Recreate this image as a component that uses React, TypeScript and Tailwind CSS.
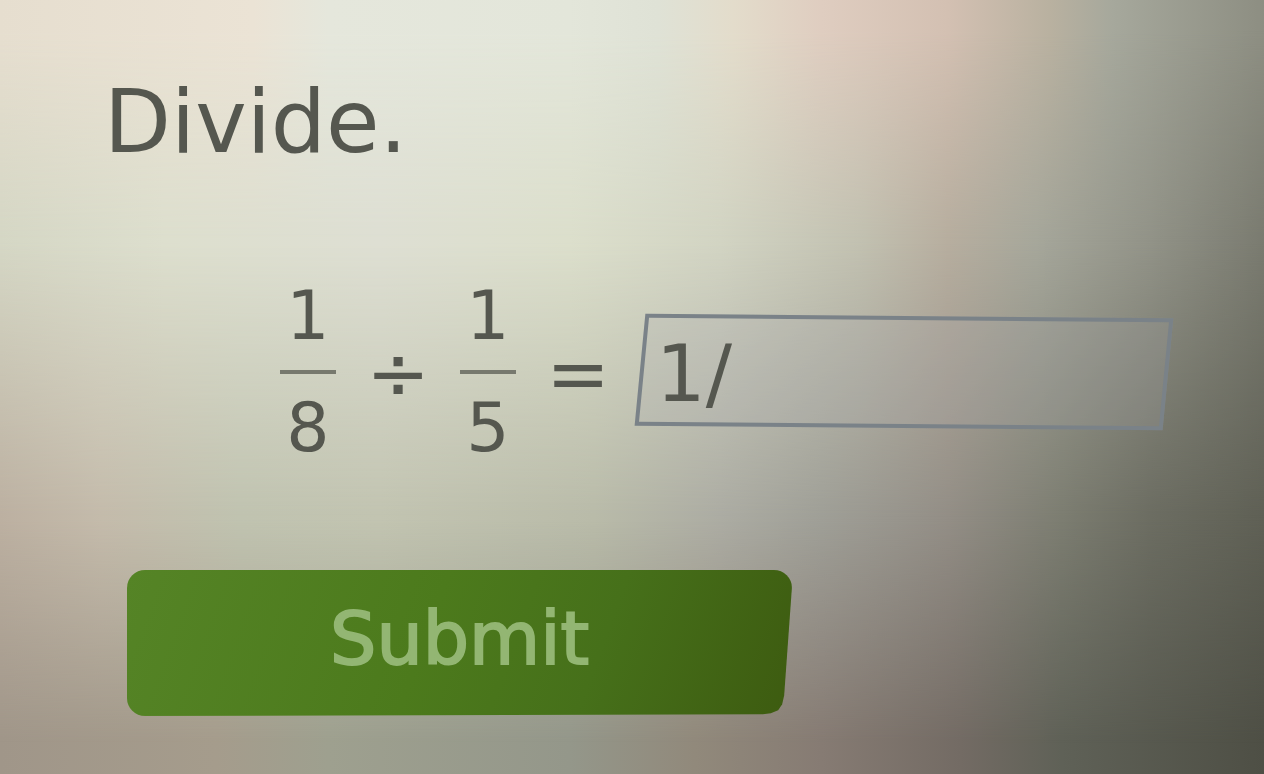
import { useState } from "react";

function Fraction({ top, bottom }: { top: string; bottom: string }) {
  return (
    <span className="flex w-14 shrink-0 flex-col text-center text-[68px] leading-[56px]">
      <span className="pb-[26px]">{top}</span>
      <span className="h-1 bg-[#77796e]" />
      <span className="pt-[26px]">{bottom}</span>
    </span>
  );
}

function Operator({ sign }: { sign: string }) {
  return <span className="w-[124px] shrink-0 pt-1 text-center text-[76px] leading-[88px]">{sign}</span>;
}

function Backdrop() {
  return (
    <div aria-hidden="true" className="absolute inset-0 -z-10">
      <div className="absolute inset-0 bg-[linear-gradient(90deg,#a09689_0%,#a59c8c_17%,#9ea08f_26%,#94978a_45%,#91897b_55%,#867b73_65%,#736b64_76%,#5f6157_84%,#4e4f45_100%)]" />
      <div className="absolute inset-0 bg-[linear-gradient(90deg,#bcb0a1_0%,#c4bbab_8%,#c0c3b0_19%,#c2c4b1_30%,#b9bba9_47%,#acaca3_57%,#9f9f97_65%,#938e86_75%,#7c7d71_84%,#6c6d62_91%,#5f6055_100%)] [mask-image:linear-gradient(180deg,#000_67%,transparent_96%)]" />
      <div className="absolute inset-0 bg-[linear-gradient(90deg,#d5d7c5_0%,#dddfce_13%,#dedfd3_30%,#dcdfcc_45%,#d2d4c3_57%,#c2c1b1_68%,#b7ae9f_75%,#a6a79b_82%,#929388_91%,#7a7b70_100%)] [mask-image:linear-gradient(180deg,#000_31%,transparent_67%)]" />
      <div className="absolute inset-0 bg-[linear-gradient(90deg,#e6decf_0%,#ebe3d5_20%,#e5e7dc_26%,#e3e6da_45%,#dfe2d6_52%,#e3dccb_58%,#dfcdc0_65%,#d3c0b2_75%,#b9b1a0_83%,#a6a89c_88%,#8d8e82_100%)] [mask-image:linear-gradient(180deg,#000_4%,transparent_31%)]" />
    </div>
  );
}

export default function App() {
  const [answer, setAnswer] = useState("1/");

  return (
    <main className="relative isolate min-h-screen overflow-hidden font-['DejaVu_Sans',sans-serif] text-[#55574f]">
      <Backdrop />
      <form className="flex flex-col pt-[66px]" onSubmit={(event) => event.preventDefault()}>
        <h1 className="pl-[104px] text-[87px] leading-[112px]">Divide.</h1>

        <div className="flex items-center pt-[110px] pr-24 pl-[280px]">
          <Fraction top="1" bottom="8" />
          <Operator sign="÷" />
          <Fraction top="1" bottom="5" />
          <Operator sign="=" />
          <div className="relative flex min-w-0 flex-1 before:absolute before:inset-0 before:-z-10 before:rotate-[0.5deg] before:skew-x-[-5deg] before:border-4 before:border-[#7a8288] before:bg-[#a9abb0]/20">
            <input
              type="text"
              aria-label="Answer"
              value={answer}
              onChange={(event) => setAnswer(event.target.value)}
              className="h-28 w-full min-w-0 bg-transparent pt-1 pl-4 text-[78px] leading-[108px] outline-none"
            />
          </div>
        </div>

        <div className="pt-[114px] pl-[127px]">
          <button
            type="submit"
            className="relative h-[146px] w-[58.5%] pb-2 text-[73px] leading-[88px] text-[#93b673] [-webkit-text-stroke:2px_#93b673] before:absolute before:inset-0 before:-z-10 before:rounded-[18px] before:bg-[linear-gradient(110deg,#558426_0%,#4c7a1c_45%,#46701a_70%,#3d5b10_100%)] before:[clip-path:polygon(0_0,100%_0,100%_10%,98.8%_86%,98.5%_92%,97.9%_96%,96.8%_98.2%,95.6%_98.8%,0_100%)]"
          >
            Submit
          </button>
        </div>
      </form>
    </main>
  );
}
